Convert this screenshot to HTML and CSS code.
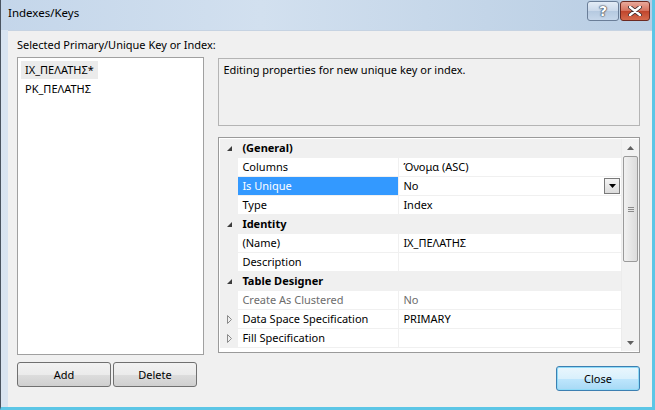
FILE: index.html
```html
<!DOCTYPE html>
<html>
<head>
<meta charset="utf-8">
<link rel="stylesheet" href="styles.css">
</head>
<body>
<div class="window">
  <div class="titlebar">
    <span class="title">Indexes/Keys</span>
    <div class="caption-btns">
      <div class="cbtn help">?</div>
      <div class="cbtn close">
        <svg width="14" height="10" viewBox="0 0 14 10"><path d="M2 1 L12 9 M12 1 L2 9" stroke="#3a2a2a" stroke-width="4" stroke-linecap="round"/><path d="M2 1 L12 9 M12 1 L2 9" stroke="#fff" stroke-width="2.4" stroke-linecap="round"/></svg>
      </div>
    </div>
  </div>
  <div class="client">
    <div class="caption">Selected Primary/Unique Key or Index:</div>
    <div class="main">
      <div class="listbox">
        <div class="item sel">IX_ΠΕΛΑΤΗΣ*</div>
        <div class="item">PK_ΠΕΛΑΤΗΣ</div>
      </div>
      <div class="right">
        <div class="desc">Editing properties for new unique key or index.</div>
        <div class="grid">
          <div class="rows">
            <div class="row cat"><span class="gl"><svg width="7" height="7" viewBox="0 0 7 7"><path d="M6 1 L6 6 L1 6 Z" fill="#3c3c3c"/></svg></span><span class="lab">(General)</span></div>
            <div class="row"><span class="gl"></span><span class="lab">Columns</span><span class="val">Όνομα (ASC)</span></div>
            <div class="row"><span class="gl"></span><span class="lab hl">Is Unique</span><span class="val">No<span class="dd"><svg width="7" height="4" viewBox="0 0 7 4"><path d="M0 0 L7 0 L3.5 4 Z" fill="#000"/></svg></span></span></div>
            <div class="row"><span class="gl"></span><span class="lab">Type</span><span class="val">Index</span></div>
            <div class="row cat"><span class="gl"><svg width="7" height="7" viewBox="0 0 7 7"><path d="M6 1 L6 6 L1 6 Z" fill="#3c3c3c"/></svg></span><span class="lab">Identity</span></div>
            <div class="row"><span class="gl"></span><span class="lab">(Name)</span><span class="val">IX_ΠΕΛΑΤΗΣ</span></div>
            <div class="row"><span class="gl"></span><span class="lab">Description</span><span class="val"></span></div>
            <div class="row cat"><span class="gl"><svg width="7" height="7" viewBox="0 0 7 7"><path d="M6 1 L6 6 L1 6 Z" fill="#3c3c3c"/></svg></span><span class="lab">Table Designer</span></div>
            <div class="row dis"><span class="gl"></span><span class="lab">Create As Clustered</span><span class="val">No</span></div>
            <div class="row"><span class="gl"><svg width="5" height="9" viewBox="0 0 5 9"><path d="M0.5 0.5 L4.5 4.5 L0.5 8.5 Z" fill="none" stroke="#8a8a8a"/></svg></span><span class="lab">Data Space Specification</span><span class="val">PRIMARY</span></div>
            <div class="row"><span class="gl"><svg width="5" height="9" viewBox="0 0 5 9"><path d="M0.5 0.5 L4.5 4.5 L0.5 8.5 Z" fill="none" stroke="#8a8a8a"/></svg></span><span class="lab">Fill Specification</span><span class="val"></span></div>
          </div>
          <div class="vscroll">
            <div class="arrow"><svg width="7" height="4" viewBox="0 0 7 4"><path d="M0 4 L7 4 L3.5 0 Z" fill="#606060"/></svg></div>
            <div class="thumb"><span class="grip"></span></div>
            <div class="track"></div>
            <div class="arrow"><svg width="7" height="4" viewBox="0 0 7 4"><path d="M0 0 L7 0 L3.5 4 Z" fill="#606060"/></svg></div>
          </div>
        </div>
      </div>
    </div>
    <div class="bottom">
      <div class="leftbtns">
        <button class="btn">Add</button>
        <button class="btn">Delete</button>
      </div>
      <button class="btn default">Close</button>
    </div>
  </div>
</div>
</body>
</html>
```

FILE: styles.css
```css
html, body {
  margin: 0;
  padding: 0;
}
body {
  width: 655px;
  height: 410px;
  overflow: hidden;
  font-family: "Noto Sans", "Open Sans", sans-serif;
  font-size: 11px;
  color: #000;
}
.window {
  width: 655px;
  height: 410px;
  box-sizing: border-box;
  border-left: 1px solid #4a5460;
  border-right: 3px solid #5cc6e6;
  border-bottom: 3px solid #5cc6e6;
  background: linear-gradient(#c9d9ec, #d8e4f1 30px, #d9e4f0);
  display: flex;
  flex-direction: column;
}
.titlebar {
  height: 30px;
  flex: none;
  display: flex;
  align-items: flex-start;
  justify-content: space-between;
  background: linear-gradient(to right, #c4d6ea, #d2e0ef 40%, #b8cde3);
}
.title {
  padding: 5px 0 0 7px;
  font-size: 11.5px;
  color: #000;
}
.caption-btns {
  display: flex;
  gap: 1px;
  padding-top: 1px;
  padding-right: 2px;
}
.cbtn {
  height: 18px;
  border: 1px solid #6a7e98;
  border-radius: 3px;
  display: flex;
  align-items: center;
  justify-content: center;
}
.help {
  width: 30px;
  background: linear-gradient(#e3ecf6, #c9d8ea 50%, #b5c9e0 51%, #c6d7ea);
  color: #fff;
  font-weight: bold;
  font-size: 14px;
  font-family: "DejaVu Sans", sans-serif;
  text-shadow: 0 0 1px #303a48, 0 0 1px #303a48, 0 0 2px #303a48;
}
.close {
  width: 28px;
  border-color: #6b2a22;
  background: linear-gradient(#e8a99b, #d5705c 50%, #c0452c 51%, #d56a4c);
}
.client {
  flex: 1;
  background: #f0f0f0;
  margin-left: 7px;
  border-top: 1px solid #c6d3e2;
  padding: 6px 12px 0 9px;
  display: flex;
  flex-direction: column;
}
.caption {
  height: 20px;
  line-height: 16px;
}
.main {
  display: flex;
  gap: 14px;
}
.listbox {
  width: 183px;
  height: 293px;
  background: #fff;
  border: 1px solid #a0a0a0;
  padding: 3px 0 0 3px;
}
.item {
  display: block;
  width: max-content;
  height: 18px;
  line-height: 18px;
  padding: 0 4px;
  margin-bottom: 1px;
}
.sel { background: #ebebeb; }
.right {
  width: 423px;
  display: flex;
  flex-direction: column;
}
.desc {
  margin-top: 1px;
  border: 1px solid #b4b4b4;
  background: #f0f0f0;
  padding: 3px 4px;
  box-sizing: border-box;
  height: 68px;
  line-height: 16px;
}
.grid {
  margin-top: 11px;
  height: 216px;
  box-sizing: border-box;
  border: 1px solid #9a9a9a;
  background: #fff;
  display: flex;
  padding: 1px 0 1px 1px;
}
.rows {
  flex: 1;
  display: flex;
  flex-direction: column;
}
.row {
  display: flex;
  height: 19px;
  box-sizing: border-box;
  border-bottom: 1px solid #f0f0f0;
  line-height: 18px;
}
.gl {
  width: 18px;
  flex: none;
  background: #f0f0f0;
  display: flex;
  align-items: center;
  justify-content: center;
}
.lab {
  width: 156px;
  flex: none;
  padding-left: 4px;
  border-right: 1px solid #f0f0f0;
}
.val {
  flex: 1;
  padding-left: 4px;
  display: flex;
  align-items: center;
  justify-content: space-between;
  padding-right: 1px;
}
.cat {
  background: #f0f0f0;
  font-weight: bold;
}
.cat .lab { border-right: none; }
.hl {
  background: #3399ff;
  color: #fff;
}
.dis { color: #6d6d6d; }
.dd {
  width: 14px;
  height: 14px;
  border: 1px solid #7a7a7a;
  background: linear-gradient(#f4f4f4, #dcdcdc);
  display: flex;
  align-items: center;
  justify-content: center;
}
.vscroll {
  width: 17px;
  flex: none;
  background: #f2f2f2;
  display: flex;
  flex-direction: column;
  border-left: 1px solid #ececec;
}
.arrow {
  height: 17px;
  display: flex;
  align-items: center;
  justify-content: center;
  flex: none;
}
.thumb {
  height: 104px;
  margin: 0 1px;
  border: 1px solid #9a9a9a;
  border-radius: 2px;
  background: linear-gradient(to right, #f1f1f1, #dcdcdc);
  display: flex;
  align-items: center;
  justify-content: center;
  flex: none;
}
.grip {
  width: 6px;
  height: 5px;
  background: repeating-linear-gradient(#8a8a8a 0 1px, transparent 1px 2px);
}
.track { flex: 1; }
.bottom {
  display: flex;
  justify-content: space-between;
  align-items: flex-start;
  margin-top: 7px;
}
.leftbtns {
  display: flex;
  gap: 2px;
}
.btn {
  font-family: "Noto Sans", "Open Sans", sans-serif;
  font-size: 11px;
  color: #000;
  width: 94px;
  height: 25px;
  border: 1px solid #707070;
  border-radius: 3px;
  background: linear-gradient(#f2f2f2, #ebebeb 50%, #dddddd 51%, #cfcfcf);
  padding: 0;
}
.leftbtns .btn + .btn { width: 84px; }
.default {
  margin-top: 4px;
  width: 84px;
  border-color: #3c7fb1;
  background: linear-gradient(#eaf6fd, #d9f0fc 50%, #bee6fd 51%, #a7d9f5);
  box-shadow: inset 0 0 0 1px #8fdbf8;
}
```
